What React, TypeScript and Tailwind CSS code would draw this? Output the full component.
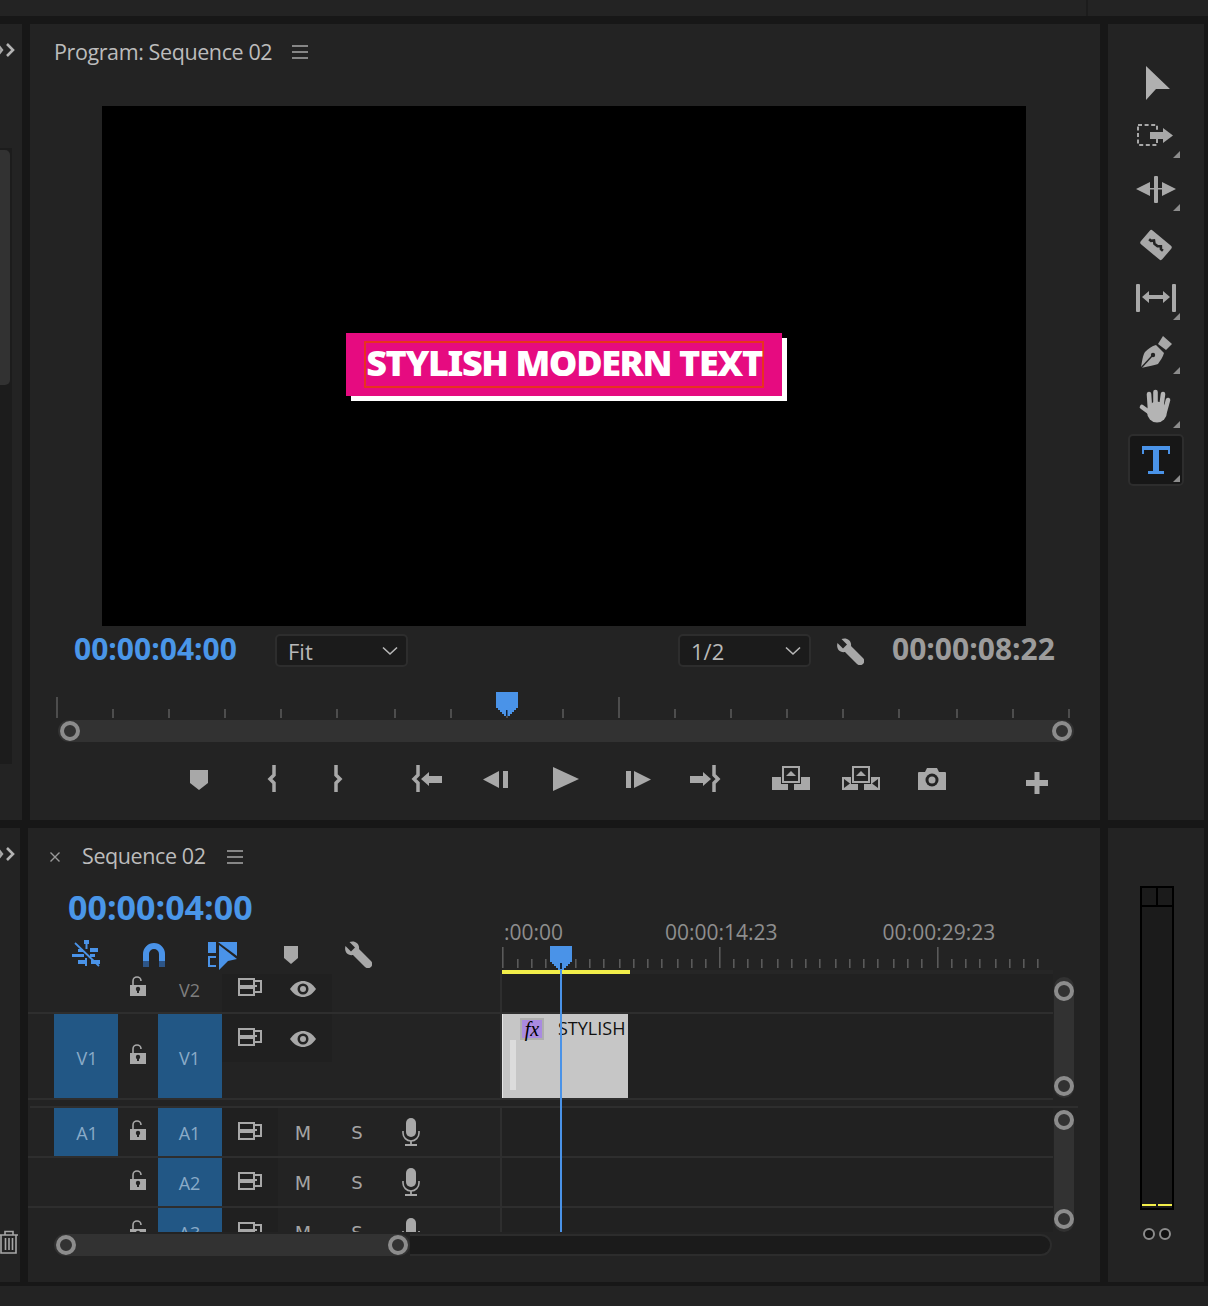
import React from "react";

const G = "#a8a8a8";
const BG = "#232323";
const BLUE = "#4a93e8";

const Tri = ({ y, x = 65 }: { y: number; x?: number }) => (
  <polygon points={`${x},${y + 7} ${x + 7},${y + 7} ${x + 7},${y}`} fill="#8c8c8c" />
);

const Burger = () => (
  <svg width="18" height="16" viewBox="0 0 18 16" className="block">
    <path d="M1 2h16M1 8h16M1 14h16" stroke="#a8a8a8" strokeWidth="1.6" />
  </svg>
);

const Chevrons = () => (
  <svg width="16" height="16" viewBox="0 0 16 16" className="block">
    <path d="M-2 3l4 5-4 5" stroke="#a8a8a8" strokeWidth="2.4" fill="none" />
    <path d="M7 2l6 6-6 6" stroke="#b4b4b4" strokeWidth="2.6" fill="none" />
  </svg>
);

const Wrench = () => (
  <svg width="28" height="28" viewBox="0 0 28 28" className="block">
    <path d="M1.5 6L7 11.5L11 7.5L5.5 2C10 0 16 3 15 9L27 21A3.4 3.4 0 0 1 21 27L9 15C3 16 0 11 1.5 6Z" fill={G} />
  </svg>
);

const Knob = () => (
  <span className="block w-5 h-5 shrink-0 rounded-full border-[4px] border-[#8c8c8c] bg-[#323232]" />
);

const Dropdown = ({ label, cls }: { label: string; cls: string }) => (
  <div className={`${cls} w-[133px] h-[33px] rounded-[5px] border-2 border-[#2d2d2d] bg-[#1b1b1b] flex items-center pl-[11px] pr-[8px] justify-between`}>
    <span className="text-[22px] font-medium leading-none text-[#b8b8b8] pt-[1px]">{label}</span>
    <svg width="16" height="10" viewBox="0 0 16 10" className="block">
      <path d="M1 1.5l7 6.5 7-6.5" stroke="#b8b8b8" strokeWidth="1.6" fill="none" />
    </svg>
  </div>
);

const progMajor = [57, 619];
const progMinor = [113, 169, 225, 281, 337, 395, 451, 507, 563, 675, 731, 787, 843, 899, 957, 1013, 1069];

const Playhead = ({ x, y }: { x: number; y: number }) => (
  <path
    d={`M${x - 11} ${y}h22v16h-2v2h-2v2h-2v2h-2v2h-2h-2h-2v-2h-2v-2h-2v-2h-2v-2h-2z`}
    fill={BLUE}
  />
);

const ProgramRuler = () => (
  <svg width="1070" height="30" viewBox="30 690 1070 30" className="block">
    {progMajor.map((x) => (
      <rect key={x} x={x - 0.75} y={697} width="1.5" height="21" fill="#5c5c5c" />
    ))}
    {progMinor.map((x) => (
      <rect key={x} x={x - 0.75} y={709} width="1.5" height="9" fill="#5c5c5c" />
    ))}
    <Playhead x={507} y={692} />
    <rect x="506" y="710" width="1.5" height="6" fill="#10243c" />
  </svg>
);

const Brace = ({ x, dir }: { x: number; dir: 1 | -1 }) => (
  <path d={`M${x} 1V11L${x + dir * 4} 15L${x} 19V28`} stroke={G} strokeWidth="3.5" fill="none" />
);

const Slot = ({ cls, children }: { cls: string; children: React.ReactNode }) => (
  <svg width="40" height="32" viewBox="0 0 40 32" className={`block shrink-0 ${cls}`} fill={G}>
    {children}
  </svg>
);

const Transport = () => (
  <div className="flex mt-[22px] h-[32px]">
    <Slot cls="ml-[149px]"><polygon points="11,6 29,6 29,19 20,26 11,19" /></Slot>
    <Slot cls="ml-[34px]"><Brace x={21} dir={-1} /></Slot>
    <Slot cls="ml-[24px]"><Brace x={19} dir={1} /></Slot>
    <Slot cls="ml-[50px]">
      <Brace x={11} dir={-1} />
      <polygon points="14,15 22,8 22,12 35,12 35,19 22,19 22,22" />
    </Slot>
    <Slot cls="ml-[30px]">
      <polygon points="6,15.5 22,7 22,24" />
      <rect x="26" y="7" width="5" height="17" />
    </Slot>
    <Slot cls="ml-[29px]"><polygon points="7,3 33,15 7,27" /></Slot>
    <Slot cls="ml-[31px]">
      <rect x="9" y="7" width="5" height="17" />
      <polygon points="17,7 34,15.5 17,24" />
    </Slot>
    <Slot cls="ml-[28px]">
      <polygon points="5,12 18,12 18,8 26,15 18,22 18,19 5,19" />
      <Brace x={29} dir={1} />
    </Slot>
    <Slot cls="ml-[46px]">
      <rect x="1" y="13" width="16" height="13" />
      <rect x="23" y="13" width="16" height="13" />
      <rect x="10" y="1" width="20" height="19" fill={BG} />
      <rect x="12" y="3" width="16" height="15" fill={BG} stroke={G} strokeWidth="2" />
      <polygon points="15,12 20,7 25,12" />
    </Slot>
    <Slot cls="ml-[30px]">
      <rect x="1" y="13" width="16" height="13" />
      <rect x="23" y="13" width="16" height="13" />
      <polygon points="3,15 3,24 9,19.5" fill={BG} />
      <polygon points="37,15 37,24 31,19.5" fill={BG} />
      <rect x="10" y="1" width="20" height="19" fill={BG} />
      <rect x="12" y="3" width="16" height="15" fill={BG} stroke={G} strokeWidth="2" />
      <polygon points="15,12 20,7 25,12" />
    </Slot>
    <Slot cls="ml-[31px]">
      <path d="M6 9a1 1 0 0 1 1-1h6l2-4h10l2 4h6a1 1 0 0 1 1 1v17H6z" />
      <circle cx="20" cy="16" r="6.5" fill={BG} />
      <circle cx="20" cy="16" r="3.5" />
    </Slot>
    <Slot cls="ml-[65px]">
      <rect x="9" y="16" width="22" height="6" />
      <rect x="17.5" y="8" width="5" height="22" />
    </Slot>
  </div>
);

const ProgramPanel = () => (
  <section className="w-[1070px] bg-[#232323] flex flex-col">
    <div className="h-[82px] pl-[24px] pb-[26px] flex items-center gap-[19px]">
      <h2 className="text-[21.5px] font-medium tracking-[-0.4px] leading-none text-[#bcbcbc]">Program: Sequence 02</h2>
      <Burger />
    </div>
    <div className="ml-[72px] w-[924px] h-[520px] bg-black flex items-center justify-center">
      <div className="mb-[4px] w-[436px] h-[63px] bg-[#e60b80] shadow-[5px_5px_0_#ffffff] flex items-center justify-center">
        <div className="w-[400px] h-[47px] border-2 border-[#e8321e] flex items-center justify-center">
          <span className="font-['Noto_Sans',sans-serif] font-black text-[36px] tracking-[-1.4px] leading-none text-white whitespace-nowrap pb-[3px]">
            STYLISH MODERN TEXT
          </span>
        </div>
      </div>
    </div>
    <div className="mt-[8px] h-[33px] flex items-center pl-[44px]">
      <span className="w-[201px] pb-[3px] text-[30px] font-bold leading-none text-[#4a96e8]">00:00:04:00</span>
      <Dropdown label="Fit" cls="" />
      <Dropdown label="1/2" cls="ml-[270px]" />
      <div className="ml-[25px]"><Wrench /></div>
      <span className="ml-[28px] pb-[3px] text-[30px] font-bold leading-none text-[#9c9c9c]">00:00:08:22</span>
    </div>
    <div className="mt-[23px]"><ProgramRuler /></div>
    <div className="ml-[28px] w-[1016px] h-[22px] rounded-full bg-[#323232] px-[2px] flex items-center justify-between">
      <Knob />
      <Knob />
    </div>
    <Transport />
  </section>
);

const Tool = ({ size, children }: { size: number; children: React.ReactNode }) => (
  <svg width="96" height={size} viewBox={`0 0 96 ${size}`} className="block" fill={G}>
    {children}
  </svg>
);

const ToolsPanel = () => (
  <aside className="w-[96px] bg-[#232323] pt-[31px]">
    <Tool size={53}>
      <polygon points="38,11 62,34 48,34 38,45" fill="#b0b0b0" />
    </Tool>
    <Tool size={54}>
      <rect x="30" y="17" width="19" height="20" fill="none" stroke={G} strokeWidth="2" strokeDasharray="4 2.6" />
      <rect x="42" y="24" width="13" height="7" />
      <polygon points="55,20 65,27.5 55,35" />
      <Tri y={43} />
    </Tool>
    <Tool size={56}>
      <polygon points="28,27 42,20 42,34" />
      <polygon points="68,27 54,20 54,34" />
      <rect x="46" y="14" width="4" height="27" rx="1" />
      <rect x="42" y="26" width="12" height="1.5" />
      <Tri y={42} />
    </Tool>
    <Tool size={52}>
      <g transform="rotate(40 48 27)">
        <rect x="34" y="18" width="28" height="18" rx="2" />
        <path d="M39 27h2.5l2-2.2 2.5 2.2h4l2.5-2.2 2 2.2h2.5" stroke="#232323" strokeWidth="2.6" fill="none" />
      </g>
    </Tool>
    <Tool size={55}>
      <rect x="28" y="14" width="4" height="28" rx="1" />
      <rect x="64" y="14" width="4" height="28" rx="1" />
      <polygon points="34,27 41,21 41,25 55,25 55,21 62,27 55,33 55,29 41,29 41,33" />
      <Tri y={43} />
    </Tool>
    <Tool size={54}>
      <polygon points="50,19 55,11 64,19 58,25" />
      <path d="M33 43C34 36 35 30 37 27C40 24 44 21 48 20L56 28C55 32 52 36 50 39C46 40 39 42 33 43Z" />
      <path d="M33 43L44 31" stroke="#232323" strokeWidth="1.4" />
      <circle cx="45" cy="30" r="2.2" fill="#232323" />
      <Tri y={42} />
    </Tool>
    <Tool size={54}>
      <g stroke="#b4b4b4" strokeWidth="4.6" strokeLinecap="round">
        <path d="M42 30L41 15" />
        <path d="M47.5 28L47.5 13" />
        <path d="M53 30L55 15" />
        <path d="M57 32L60 21" />
        <path d="M45 36L34 28" />
      </g>
      <ellipse cx="49" cy="33" rx="10" ry="10.5" fill="#b4b4b4" />
      <Tri y={42} />
    </Tool>
    <div className="mt-[1px] ml-[20px] w-[56px] h-[52px] rounded-[5px] border-2 border-[#2d2d2d] bg-[#171717]">
      <svg width="52" height="48" viewBox="2 2 52 48" className="block">
        <path d="M14 12H42V20H40V16H31V37H36V40H20V37H25V16H16V20H14Z" fill={BLUE} />
        <polygon points="45,48 52,48 52,41" fill="#8c8c8c" />
      </svg>
    </div>
  </aside>
);

const Lock = () => (
  <svg width="16" height="20" viewBox="0 0 16 20" className="block">
    <path d="M3 9V5a4 4 0 0 1 8 0" stroke={G} strokeWidth="1.6" fill="none" />
    <path d="M0 9h16v11H0z" fill={G} />
    <circle cx="8" cy="13" r="2.2" fill="#232323" />
    <rect x="7" y="13" width="2" height="4" fill="#232323" />
  </svg>
);

const Toggle = () => (
  <svg width="24" height="18" viewBox="0 0 24 18" className="block" fill="none" stroke={G} strokeWidth="2">
    <rect x="1" y="1" width="15" height="7" />
    <rect x="1" y="10" width="15" height="7" />
    <path d="M16 3H23V14H16" />
    <path d="M16 8h3" />
  </svg>
);

const Eye = () => (
  <svg width="26" height="16" viewBox="0 0 26 16" className="block">
    <path d="M0 8C4 2 9 0 13 0s9 2 13 8c-4 6-9 8-13 8S4 14 0 8Z" fill={G} />
    <circle cx="13" cy="8" r="5.5" fill="#232323" />
    <circle cx="13" cy="8" r="3" fill={G} />
  </svg>
);

const Mic = () => (
  <svg width="18" height="28" viewBox="0 0 18 28" className="block">
    <rect x="4" y="0" width="10" height="19" rx="5" fill={G} />
    <path d="M1 13v2a8 8 0 0 0 16 0v-2" stroke={G} strokeWidth="1.6" fill="none" />
    <path d="M9 23v4M3 27h12" stroke={G} strokeWidth="1.8" />
  </svg>
);

const BlueBox = ({ label, cls, tall }: { label: string; cls: string; tall?: boolean }) => (
  <div className={`${cls} w-[64px] h-full bg-[#225785] flex items-center justify-center text-[18px] leading-none text-[#8aabc8] ${tall ? "pt-[3px]" : "pt-[2px]"}`}>
    {label}
  </div>
);

const VideoHeader = ({ tall }: { tall?: boolean }) => (
  <div className="w-[472px] shrink-0 flex h-full">
    <div className="w-[26px]" />
    {tall ? <BlueBox label="V1" cls="pl-[2px]" tall /> : <div className="w-[64px]" />}
    <div className={`w-[40px] flex justify-center ${tall ? "pt-[30px]" : "pt-[2px]"}`}><Lock /></div>
    {tall ? (
      <BlueBox label="V1" cls="pr-[1px]" tall />
    ) : (
      <div className="w-[64px] flex items-center justify-center text-[18px] leading-none text-[#7e7e7e] pb-[8px] pt-[2px] pr-[1px]">V2</div>
    )}
    <div className={`w-[110px] ${tall ? "h-[48px]" : ""} bg-[#202020] flex`}>
      <div className={`ml-[16px] ${tall ? "mt-[14px]" : "mt-[4px]"}`}><Toggle /></div>
      <div className={`ml-[28px] ${tall ? "mt-[17px]" : "mt-[7px]"}`}><Eye /></div>
    </div>
  </div>
);

const AudioHeader = ({ first, label }: { first?: boolean; label: string }) => (
  <div className="w-[472px] shrink-0 flex h-full">
    <div className="w-[26px]" />
    {first ? <BlueBox label="A1" cls="pl-[2px]" /> : <div className="w-[64px]" />}
    <div className="w-[40px] flex justify-center pt-[12px]"><Lock /></div>
    <BlueBox label={label} cls="pr-[1px]" />
    <div className="w-[56px] bg-[#202020] pl-[16px] pt-[14px]"><Toggle /></div>
    <div className="w-[50px] text-center text-[19px] leading-none text-[#a4a4a4] pt-[16px] font-['DejaVu_Sans',sans-serif]">M</div>
    <div className="w-[58px] text-center text-[18px] leading-none text-[#a4a4a4] pt-[16px] font-['DejaVu_Sans',sans-serif]">S</div>
    <div className="w-[50px] flex justify-center pt-[10px]"><Mic /></div>
  </div>
);

const Row = ({ h, children, lane }: { h: string; children: React.ReactNode; lane?: React.ReactNode }) => (
  <div className={`${h} shrink-0 flex border-b-2 border-[#2e2e2e]`}>
    {children}
    <div className="w-[2px] bg-[#2e2e2e]" />
    <div className="flex-1 bg-[#212121] overflow-hidden">{lane}</div>
  </div>
);

const Clip = () => (
  <div className="w-[126px] h-full bg-[#c6c6c6] border-l border-[#e6e6e6] flex overflow-hidden">
    <div className="ml-[7px] mt-[26px] w-[6px] h-[50px] bg-[#dcdcdc]" />
    <div className="ml-[4px] mt-[4px] w-[24px] h-[22px] border-2 border-[#aeaeae] bg-[#a98ae0] flex items-center justify-center font-['Liberation_Serif',serif] italic text-[20px] leading-none text-black">
      fx
    </div>
    <span className="ml-[14px] mt-[3px] text-[18px] leading-[22px] text-[#111] whitespace-nowrap">STYLISH</span>
  </div>
);

const tlMajor = [502, 719, 937];
const tlMinor = [517, 531, 545, 561, 575, 589, 603, 619, 633, 647, 661, 677, 691, 705, 733, 747, 761, 777, 791, 805, 819, 835, 849, 863, 877, 893, 907, 921, 951, 965, 979, 995, 1009, 1023, 1037];

const TimelineRuler = () => (
  <svg width="560" height="29" viewBox="500 945 560 29" className="block ml-[-2px]">
    {tlMajor.map((x) => (
      <rect key={x} x={x} y={947} width="1.6" height="21" fill="#5a5a5a" />
    ))}
    {tlMinor.map((x) => (
      <rect key={x} x={x} y={959} width="1.6" height="9" fill="#5a5a5a" />
    ))}
    <rect x="500" y="970" width="553" height="4" fill="#262626" />
    <rect x="502" y="970" width="128" height="4" fill="#f2ee4a" />
    <Playhead x={561} y={946} />
    <rect x="560" y="963" width="2" height="6" fill="#10243c" />
    <rect x="560" y="969" width="2" height="5" fill={BLUE} />
  </svg>
);

const TimelineTools = () => (
  <div className="flex items-start mt-[12px] ml-[44px]">
    <svg width="28" height="28" viewBox="0 0 28 28" className="block">
      <g fill={BLUE}>
        <path d="M12 0h5v4h-1.5v5h-2V4H12z" />
        <rect x="6" y="9" width="5" height="3" />
        <rect x="18" y="8" width="8" height="4" />
        <rect x="0" y="14" width="12" height="3" />
        <rect x="18" y="14" width="5" height="3" />
        <rect x="6" y="20" width="7" height="4" />
        <rect x="19" y="20" width="9" height="4" />
        <rect x="13" y="18" width="2" height="8" />
      </g>
      <path d="M3 3L27 26" stroke={BLUE} strokeWidth="1.8" />
    </svg>
    <svg width="24" height="25" viewBox="0 0 24 25" className="block ml-[42px] mt-[2px]">
      <path d="M1 19V12a11 11 0 0 1 22 0v7h-6v-7a5 5 0 0 0-10 0v7z" fill={BLUE} />
      <path d="M1 19h6v6H1zM17 19h6v6h-6z" fill="#2d5587" />
    </svg>
    <svg width="30" height="28" viewBox="0 0 30 28" className="block ml-[42px] mt-[2px]">
      <g fill={BLUE}>
        <rect x="0" y="0" width="8" height="11" />
        <polygon points="10,0 29,0 29,14" />
        <polygon points="11,3 29,17 20,19 11,28" />
        <path d="M0 14h8v2H2v7h6v2H0z" />
      </g>
    </svg>
    <svg width="16" height="18" viewBox="0 0 16 18" className="block ml-[45px] mt-[6px]">
      <polygon points="1,0 15,0 15,12 8,18 1,12" fill={G} />
    </svg>
    <div className="ml-[45px]"><Wrench /></div>
  </div>
);

const VScroll = ({ cls }: { cls: string }) => (
  <div className={`${cls} w-[20px] ml-[1px] rounded-full bg-[#323232] flex flex-col items-center justify-between`}>
    <Knob />
    <Knob />
  </div>
);

const TimelinePanel = () => (
  <section className="w-[1072px] bg-[#232323] flex flex-col">
    <div className="h-[58px] pb-[2px] flex items-center pl-[22px]">
      <svg width="10" height="10" viewBox="0 0 10 10" className="block mt-[2px]">
        <path d="M0.5 0.5l9 9M9.5 0.5l-9 9" stroke="#9a9a9a" strokeWidth="1.4" />
      </svg>
      <span className="ml-[22px] text-[21.5px] font-medium tracking-[-0.4px] leading-none text-[#bcbcbc]">Sequence 02</span>
      <div className="ml-[20px] mt-[2px]"><Burger /></div>
    </div>
    <div className="h-[88px] flex">
      <div className="w-[474px] shrink-0">
        <div className="pl-[40px] text-[34px] font-bold leading-[42px] text-[#4a96e8]">00:00:04:00</div>
        <TimelineTools />
      </div>
      <div className="flex-1 flex flex-col">
        <div className="h-[59px] pt-[36px] flex text-[21px] font-medium leading-none text-[#8e8e8e] whitespace-nowrap">
          <span className="w-[61px] text-right">:00:00</span>
          <span className="ml-[102px]">00:00:14:23</span>
          <span className="ml-[105px]">00:00:29:23</span>
        </div>
        <TimelineRuler />
      </div>
    </div>
    <div className="h-[258px] relative overflow-hidden flex flex-col">
      <div className="h-[126px] shrink-0 flex">
        <div className="w-[1025px] flex flex-col">
          <Row h="h-[40px]"><VideoHeader /></Row>
          <Row h="h-[86px]" lane={<Clip />}><VideoHeader tall /></Row>
        </div>
        <VScroll cls="mt-[3px] h-[121px] pt-[4px] pb-[2px]" />
      </div>
      <div className="mt-[6px] h-[2px] w-[1048px] ml-[2px] shrink-0 bg-[#2e2e2e]" />
      <div className="h-[124px] shrink-0 flex">
        <div className="w-[1025px] flex flex-col">
          <Row h="h-[50px]"><AudioHeader first label="A1" /></Row>
          <Row h="h-[50px]"><AudioHeader label="A2" /></Row>
          <Row h="h-[50px]"><AudioHeader label="A3" /></Row>
        </div>
        <VScroll cls="mt-[2px] h-[122px] pb-[3px]" />
      </div>
      <div className="absolute left-[532px] top-0 bottom-0 w-[2px] bg-[#4a93e8]" />
    </div>
    <div className="mt-[2px] ml-[26px] w-[998px] h-[22px] flex">
      <div className="w-[356px] h-full rounded-full bg-[#323232] px-[2px] flex items-center justify-between">
        <Knob />
        <Knob />
      </div>
      <div className="flex-1 h-full rounded-r-full bg-[#1b1b1b] border-2 border-l-0 border-[#2c2c2c]" />
    </div>
  </section>
);

export default function App() {
  return (
    <div className="w-[1208px] h-[1306px] overflow-hidden bg-[#171717] flex flex-col font-['Open_Sans',sans-serif]">
      <div className="h-[16px] shrink-0 bg-[#232323]">
        <div className="ml-[1086px] w-[2px] h-full bg-[#1c1c1c]" />
      </div>
      <div className="mt-[8px] h-[796px] shrink-0 flex">
        <div className="w-[22px] bg-[#232323] flex flex-col">
          <div className="h-[124px] pt-[18px]"><Chevrons /></div>
          <div className="w-[12px] h-[616px] bg-[#1c1c1c] pt-[2px]">
            <div className="w-[10px] h-[235px] rounded-r-[5px] bg-[#323232]" />
          </div>
        </div>
        <div className="w-[8px]" />
        <ProgramPanel />
        <div className="w-[8px]" />
        <ToolsPanel />
      </div>
      <div className="mt-[8px] h-[454px] shrink-0 flex">
        <div className="w-[20px] bg-[#232323] flex flex-col justify-between">
          <div className="pt-[18px]"><Chevrons /></div>
          <div className="pb-[28px]">
            <svg width="18" height="24" viewBox="0 0 18 24" className="block">
              <path d="M-1 5h19M5 5V1.5h8V5M1 5v18h15V5M5.5 8v12M9 8v12M12.5 8v12" stroke={G} strokeWidth="1.6" fill="none" />
            </svg>
          </div>
        </div>
        <div className="w-[8px]" />
        <TimelinePanel />
        <div className="w-[8px]" />
        <aside className="w-[96px] bg-[#232323] pt-[58px] pl-[2px] flex flex-col items-center">
          <div className="w-[34px] h-[324px] border-2 border-black bg-[#1b1b1b] flex flex-col">
            <div className="h-[19px] border-b-2 border-black flex justify-center">
              <div className="w-[2px] h-full bg-black" />
            </div>
            <div className="flex-1 flex items-end gap-[2px] pb-[2px]">
              <div className="flex-1 h-[2px] bg-[#f2ee4a]" />
              <div className="flex-1 h-[2px] bg-[#f2ee4a]" />
            </div>
          </div>
          <div className="mt-[18px] flex gap-[4px]">
            <span className="block w-3 h-3 rounded-full border-2 border-[#8c8c8c] bg-[#111]" />
            <span className="block w-3 h-3 rounded-full border-2 border-[#8c8c8c] bg-[#111]" />
          </div>
        </aside>
      </div>
      <div className="mt-[4px] flex-1 bg-[#232323]" />
    </div>
  );
}
